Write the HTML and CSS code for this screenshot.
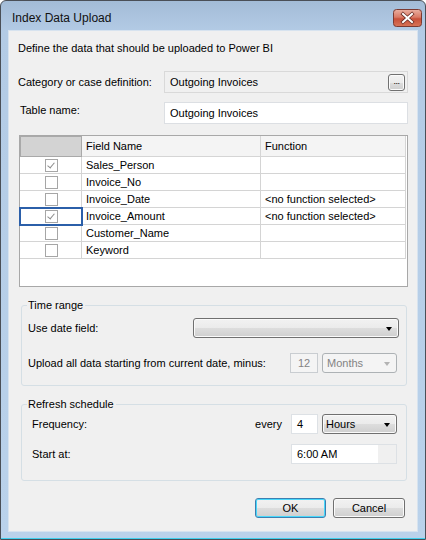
FILE: index.html
```html
<!DOCTYPE html>
<html>
<head>
<meta charset="utf-8">
<link rel="stylesheet" href="styles.css">
</head>
<body>
<div class="window">
  <div class="titlebar">
    <span class="title">Index Data Upload</span>
    <span class="close">
      <svg width="29" height="18" viewBox="0 0 29 18">
        <defs>
          <linearGradient id="cg" x1="0" y1="0" x2="0" y2="1">
            <stop offset="0" stop-color="#eab0a2"/>
            <stop offset="0.45" stop-color="#da7a66"/>
            <stop offset="0.55" stop-color="#c8503a"/>
            <stop offset="1" stop-color="#d87558"/>
          </linearGradient>
        </defs>
        <rect x="0.5" y="0.5" width="28" height="17" rx="3" fill="url(#cg)" stroke="#7b3a32"/>
        <path d="M10 5 L19 13 M19 5 L10 13" stroke="#6a2d25" stroke-width="3.6" stroke-linecap="square"/>
        <path d="M10 5 L19 13 M19 5 L10 13" stroke="#ffffff" stroke-width="2" stroke-linecap="square"/>
      </svg>
    </span>
  </div>
  <div class="content">
    <div class="intro">Define the data that should be uploaded to Power BI</div>
    <div class="form-row cat-row">
      <span class="label">Category or case definition:</span>
      <div class="textbox readonly">
        <span>Outgoing Invoices</span>
        <span class="dots">...</span>
      </div>
    </div>
    <div class="form-row table-row">
      <span class="label label-table">Table name:</span>
      <div class="textbox"><span>Outgoing Invoices</span></div>
    </div>
    <div class="grid">
      <div class="grow ghead">
        <div class="gc c1 corner"></div>
        <div class="gc c2">Field Name</div>
        <div class="gc c3">Function</div>
      </div>
      <div class="grow">
        <div class="gc c1"><span class="chk checked"></span></div>
        <div class="gc c2">Sales_Person</div>
        <div class="gc c3"></div>
      </div>
      <div class="grow">
        <div class="gc c1"><span class="chk"></span></div>
        <div class="gc c2">Invoice_No</div>
        <div class="gc c3"></div>
      </div>
      <div class="grow">
        <div class="gc c1"><span class="chk"></span></div>
        <div class="gc c2">Invoice_Date</div>
        <div class="gc c3">&lt;no function selected&gt;</div>
      </div>
      <div class="grow">
        <div class="gc c1 selected"><span class="chk checked"></span></div>
        <div class="gc c2">Invoice_Amount</div>
        <div class="gc c3">&lt;no function selected&gt;</div>
      </div>
      <div class="grow">
        <div class="gc c1"><span class="chk"></span></div>
        <div class="gc c2">Customer_Name</div>
        <div class="gc c3"></div>
      </div>
      <div class="grow">
        <div class="gc c1"><span class="chk"></span></div>
        <div class="gc c2">Keyword</div>
        <div class="gc c3"></div>
      </div>
    </div>

    <fieldset class="group time-group">
      <legend>Time range</legend>
      <div class="grp-row row-date">
        <span>Use date field:</span>
        <div class="combo wide"><span></span><span class="arrow"></span></div>
      </div>
      <div class="grp-row row-upload">
        <span>Upload all data starting from current date, minus:</span>
        <div class="ctrls">
          <div class="numbox disabled">12</div>
          <div class="combo flat disabled"><span>Months</span><span class="arrow light"></span></div>
        </div>
      </div>
    </fieldset>

    <fieldset class="group refresh-group">
      <legend>Refresh schedule</legend>
      <div class="grp-row row-freq">
        <span>Frequency:</span>
        <div class="ctrls">
          <span class="every">every</span>
          <div class="numbox left">4</div>
          <div class="combo"><span>Hours</span><span class="arrow"></span></div>
        </div>
      </div>
      <div class="grp-row row-start">
        <span>Start at:</span>
        <div class="timebox"><span>6:00 AM</span><span class="spin"></span></div>
      </div>
    </fieldset>

    <div class="buttons">
      <button class="btn default">OK</button>
      <button class="btn">Cancel</button>
    </div>
  </div>
</div>
</body>
</html>
```

FILE: styles.css
```css
* { box-sizing: border-box; }
html, body { margin: 0; padding: 0; background: #ffffff; }
body {
  font-family: "Liberation Sans", Arial, sans-serif;
  font-size: 11px;
  color: #000;
}
.window {
  width: 426px;
  height: 540px;
  border: 1px solid #4a4f57;
  border-radius: 6px 6px 0 0;
  background: linear-gradient(#a3bcd7 0, #b3cbe5 30px, #bad2eb 100%);
  padding: 0 7px 7px 7px;
  box-shadow: inset 0 -1px 0 #3fd0ee;
  display: flex;
  flex-direction: column;
}
.titlebar {
  height: 29px;
  display: flex;
  align-items: flex-start;
  justify-content: space-between;
}
.title {
  font-size: 12px;
  margin: 10px 0 0 4px;
  color: #111;
  font-family: "Liberation Sans", Arial, sans-serif;
}
.close { margin: 8px -4px 0 0; height: 18px; display: block; }
.close svg { display: block; }

.content {
  flex: 1;
  background: #f0f0f0;
  border: 1px solid #d7e3ef;
  padding: 0 9px 0 9px;
  display: flex;
  flex-direction: column;
}
.intro { margin-top: 11px; line-height: 13px; height: 13px; }
.form-row {
  display: flex;
  align-items: center;
  justify-content: space-between;
  height: 22px;
}
.cat-row { margin-top: 16px; }
.table-row { margin-top: 9px; }
.label-table { padding-left: 2px; align-self: flex-start; margin-top: 2px; }
.textbox {
  width: 244px;
  height: 22px;
  border: 1px solid #dcdfe3;
  background: #fff;
  display: flex;
  align-items: center;
  justify-content: space-between;
  padding: 0 2px 0 5px;
}
.textbox.readonly { background: #f0f0f0; border-color: #d9d9d9; }
.dots {
  width: 17px;
  height: 17px;
  border: 1px solid #707070;
  border-radius: 3px;
  background: linear-gradient(#f2f2f2, #ebebeb 50%, #dddddd 51%, #cfcfcf);
  box-shadow: inset 0 0 0 1px #fbfbfb;
  font-size: 9px;
  line-height: 12px;
  text-align: center;
  letter-spacing: -0.5px;
}

.grid {
  margin-top: 11px;
  margin-left: 1px;
  width: 389px;
  height: 152px;
  border: 1px solid #a8a8a8;
  background: #fff;
}
.grow {
  display: grid;
  grid-template-columns: 62px 179px 145px;
  height: 17px;
}
.ghead { height: 21px; }
.gc {
  border-right: 1px solid #d4d4d4;
  border-bottom: 1px solid #d4d4d4;
  padding-left: 4px;
  line-height: 16px;
  white-space: nowrap;
  position: relative;
}
.ghead .gc { line-height: 20px; background: #f4f4f4; border-color: #d5d5d5; }
.ghead .corner { background: #d3d3d3; border: 1px solid #a9a9a9; }
.c1 { display: flex; align-items: center; justify-content: center; padding-left: 0; }
.c2 { padding-left: 4px; }
.selected { outline: 2px solid #2b5fa9; outline-offset: -1px; z-index: 1; }
.chk {
  width: 13px;
  height: 13px;
  border: 1px solid #a6a6a6;
  background: #fff;
  display: block;
  margin-left: 1px;
  position: relative;
}
.chk.checked::after {
  content: "";
  position: absolute;
  left: 3px;
  top: 1px;
  width: 3px;
  height: 6px;
  border-right: 1.5px solid #8c8c8c;
  border-bottom: 1.5px solid #8c8c8c;
  transform: rotate(40deg);
}

.group {
  margin: 0;
  border: 1px solid #d5dfe5;
  border-radius: 3px;
  padding: 0 7px 0 6px;
  min-width: 0;
  margin-left: 3px;
  width: 386px;
}
.group legend {
  padding: 0 2px 0 1px;
  margin-left: -1px;
  line-height: 13px;
  height: 13px;
}
.time-group { margin-top: 12px; height: 87px; }
.refresh-group { margin-top: 12px; height: 83px; }
.grp-row {
  display: flex;
  align-items: center;
  justify-content: space-between;
  height: 20px;
}
.row-date { margin-top: 6px; }
.row-upload { margin-top: 15px; padding-right: 2px; }
.row-freq { margin-top: 3px; padding: 0 2px 0 4px; }
.row-start { margin-top: 10px; padding: 0 2px 0 4px; }
.ctrls { display: flex; align-items: center; }

.combo {
  width: 75px;
  height: 20px;
  border: 1px solid #707070;
  border-radius: 3px;
  background: linear-gradient(#f2f2f2, #ebebeb 50%, #dddddd 51%, #cfcfcf);
  box-shadow: inset 0 0 0 1px #fafafa;
  display: flex;
  align-items: center;
  justify-content: space-between;
  padding: 0 6px 0 3px;
  margin-left: 4px;
}
.combo.wide { width: 206px; margin-left: 0; }
.combo.disabled {
  background: #f4f4f4;
  border-color: #adb2b5;
  box-shadow: none;
  color: #838383;
  padding-left: 4px;
}
.arrow {
  width: 0;
  height: 0;
  border-left: 3.5px solid transparent;
  border-right: 3.5px solid transparent;
  border-top: 4px solid #000;
  margin-top: 1px;
}
.arrow.light { border-top-color: #b3b3b3; }
.numbox {
  width: 28px;
  height: 20px;
  border: 1px solid #dde1e5;
  background: #fff;
  text-align: center;
  line-height: 18px;
}
.numbox.disabled { background: #f4f4f4; border-color: #c9cdd1; color: #838383; }
.numbox.left { text-align: left; padding-left: 5px; width: 27px; }
.every { margin-right: 9px; }
.timebox {
  width: 106px;
  height: 20px;
  border: 1px solid #dde1e5;
  background: #fff;
  display: flex;
  align-items: center;
  justify-content: space-between;
  padding-left: 5px;
}
.spin { width: 18px; height: 18px; background: #f0f0f0; }

.buttons {
  display: flex;
  justify-content: flex-end;
  margin-top: 17px;
  gap: 7px;
  padding-right: 3px;
}
.btn {
  width: 72px;
  height: 20px;
  border: 1px solid #707070;
  border-radius: 3px;
  background: linear-gradient(#f2f2f2, #ebebeb 50%, #dddddd 51%, #cfcfcf);
  box-shadow: inset 0 0 0 1px #fbfbfb;
  font-family: "Liberation Sans", Arial, sans-serif;
  font-size: 11px;
  color: #000;
  padding: 0;
}
.btn.default { border-color: #3c7fb1; box-shadow: inset 0 0 0 1px #48d8fb; width: 71px; }
```
